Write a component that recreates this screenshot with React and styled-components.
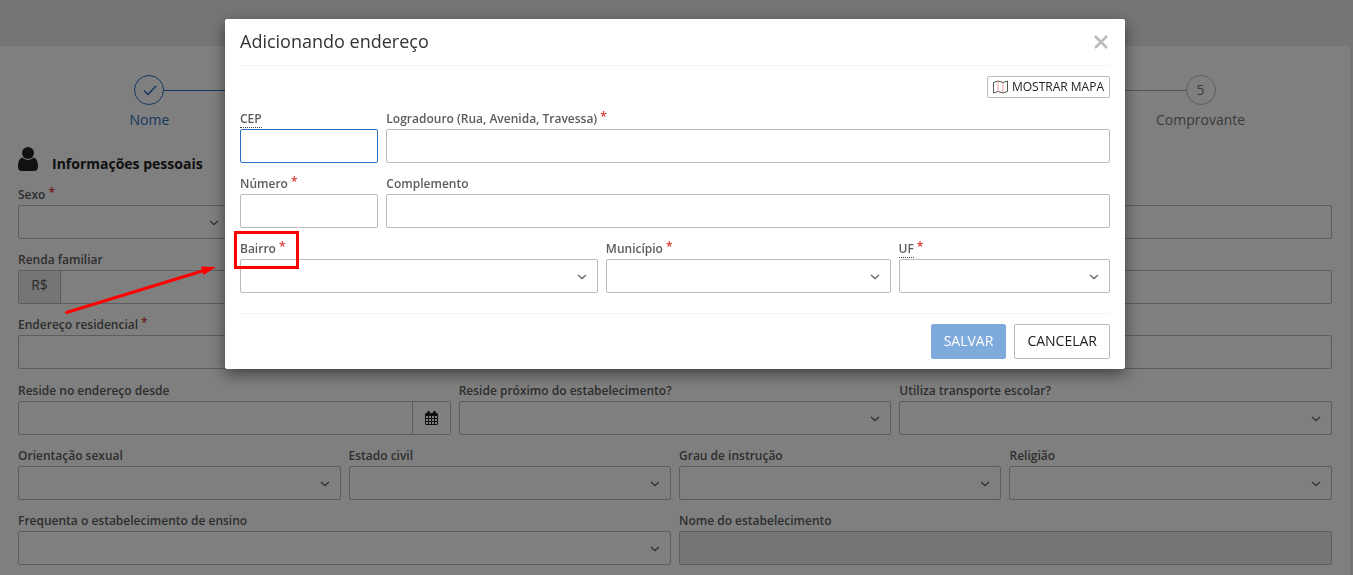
import React, { useId } from "react";
import styled, { createGlobalStyle } from "styled-components";

const GlobalStyle = createGlobalStyle`
  * { box-sizing: border-box; }
  body {
    margin: 0;
    background: #e9ebee;
    color: #222;
    font: 14px/20px "Open Sans", "Noto Sans", sans-serif;
  }
  input, select, button { font: inherit; color: inherit; }
`;

const Page = styled.div`
  padding: 46px 3px 0 0;
  height: 100vh;
  overflow: hidden;
`;

const Card = styled.main`
  min-height: 100%;
  padding: 29px 18px 28px;
  background: #fff;
  border-radius: 2px;
`;

const Steps = styled.ol`
  display: grid;
  grid-template-columns: repeat(5, 1fr);
  margin: 0;
  padding: 0;
  list-style: none;
`;

const Step = styled.li`
  display: grid;
  grid-template-columns: 1fr 30px 1fr;
  align-items: center;
  row-gap: 5px;
  min-height: 55px;
  color: ${(p) => (p.$done ? "#2a6fc3" : "#777")};
`;

const StepLine = styled.span`
  height: 1px;
  background: ${(p) => (p.$hidden ? "transparent" : p.$done ? "#2a6fc3" : "#aaa")};
`;

const StepMark = styled.span`
  display: flex;
  align-items: center;
  justify-content: center;
  height: 30px;
  border: 1px solid ${(p) => (p.$done ? "#2a6fc3" : "#bbb")};
  border-radius: 50%;
`;

const StepName = styled.span`
  grid-column: 1 / -1;
  text-align: center;
`;

const SectionTitle = styled.h2`
  display: flex;
  align-items: flex-end;
  gap: 14px;
  height: 31px;
  margin: 13px 0 12px;
  font-size: 14px;
  line-height: 20px;
  font-weight: 700;
  svg { align-self: center; }
`;

const FieldGrid = styled.div`
  display: grid;
  grid-template-columns: repeat(12, minmax(0, 1fr));
  gap: 12px 8px;
  & + & { margin-top: 13px; }
`;

const FieldBox = styled.div`
  grid-column: span ${(p) => p.$span};
  display: flex;
  flex-direction: column;
  justify-content: flex-end;
  gap: 1px;
`;

const Label = styled.label`
  height: 18px;
  font-size: 12px;
  line-height: 18px;
  font-weight: 600;
  color: #5c5c5c;
  white-space: nowrap;
`;

const Abbr = styled.abbr`
  display: inline-block;
  line-height: 16px;
  border-bottom: 1px dotted #444;
  text-decoration: none;
`;

const Required = styled.sup`
  margin-left: 3px;
  color: #d9302c;
  font-size: 12px;
  line-height: 0;
  vertical-align: 2px;
`;

const TextInput = styled.input`
  width: 100%;
  min-width: 0;
  height: 34px;
  padding: 6px 12px;
  border: 1px solid ${(p) => (p.$active ? "#2a6fc3" : "#bbb")};
  border-radius: 2px;
  background: #fff;
  outline: none;
  &:disabled { background: #e9ebee; }
`;

const SelectWrap = styled.div`
  position: relative;
  color: #666;
  svg {
    position: absolute;
    top: 15px;
    right: 11px;
    pointer-events: none;
  }
`;

const SelectInput = styled.select`
  display: block;
  width: 100%;
  height: 34px;
  padding: 6px 12px;
  border: 1px solid #bbb;
  border-radius: 2px;
  background: #fff;
  appearance: none;
`;

const Group = styled.div`
  display: flex;
  height: 34px;
  border: 1px solid #bbb;
  border-radius: 2px;
  ${TextInput} { height: 32px; border: 0; }
`;

const Prefix = styled.span`
  flex: 0 0 42px;
  padding-top: 4px;
  border-right: 1px solid #bbb;
  background: #e9ebee;
  color: #555;
  text-align: center;
`;

const IconButton = styled.button`
  display: flex;
  align-items: center;
  justify-content: center;
  flex: 0 0 38px;
  padding: 0;
  border: 0;
  border-left: 1px solid #bbb;
  background: #fff;
`;

const Backdrop = styled.div`
  position: fixed;
  inset: 0;
  padding: 19px 3px 0 0;
  background: rgba(0, 0, 0, 0.5);
`;

const Dialog = styled.section`
  max-width: 900px;
  margin: 0 auto;
  padding: 0 15px 10px;
  border-radius: 2px;
  background: #fff;
  box-shadow: 0 5px 15px rgba(0, 0, 0, 0.5);
`;

const DialogHeader = styled.header`
  display: flex;
  align-items: center;
  justify-content: space-between;
  height: 47px;
  border-bottom: 1px solid #f4f4f4;
`;

const DialogTitle = styled.h1`
  margin: 0;
  padding-bottom: 2px;
  font-size: 18px;
  line-height: 24px;
  font-weight: 400;
  color: #333;
`;

const CloseButton = styled.button`
  display: flex;
  padding: 0;
  border: 0;
  background: none;
  color: #bbb;
`;

const MapBar = styled.div`
  display: flex;
  justify-content: flex-end;
  padding: 10px 0 12px;
`;

const MapButton = styled.button`
  display: flex;
  align-items: center;
  gap: 4px;
  height: 22px;
  padding: 0 5px;
  border: 1px solid #bbb;
  border-radius: 2px;
  background: #fff;
  font-size: 12px;
`;

const DialogFooter = styled.footer`
  display: flex;
  justify-content: flex-end;
  gap: 8px;
  margin-top: 20px;
  padding-top: 10px;
  border-top: 1px solid #f4f4f4;
`;

const Button = styled.button`
  height: 35px;
  padding: 0 12px 2px;
  border: 1px solid ${(p) => (p.$primary ? "#7faadc" : "#bbb")};
  border-radius: 2px;
  background: ${(p) => (p.$primary ? "#7faadc" : "#fff")};
  color: ${(p) => (p.$primary ? "#fff" : "#222")};
`;

const Annotation = styled.svg`
  position: absolute;
  top: 0;
  left: 50%;
  margin-left: -677px;
  pointer-events: none;
`;

function Chevron() {
  return (
    <svg width="10" height="7" viewBox="0 0 10 7" fill="none" stroke="currentColor" strokeWidth="1.3" aria-hidden="true">
      <path d="M1 1 5 4.600 9 1" />
    </svg>
  );
}

function Field({ label, hint, abbr, required, span, type = "text", active, disabled }) {
  const id = useId();
  let control;
  if (type === "select") {
    control = (
      <SelectWrap>
        <SelectInput id={id} aria-label={hint}><option value="" /></SelectInput>
        <Chevron />
      </SelectWrap>
    );
  } else if (type === "money") {
    control = <Group><Prefix>R$</Prefix><TextInput id={id} /></Group>;
  } else if (type === "date") {
    control = (
      <Group>
        <TextInput id={id} />
        <IconButton type="button" aria-label="Abrir calendário">
          <svg width="13" height="14" viewBox="0 0 13 14" aria-hidden="true">
            <path fill="currentColor" fillRule="evenodd" d="M1 2h1V1l1-1h1l1 1v1h3V1l1-1h1l1 1v1h1l1 1v10l-1 1H1l-1-1V3zM1 5v2h2V5zm3 0v2h2V5zm3 0v2h2V5zm3 0v2h2V5zM1 8v2h2V8zm3 0v2h2V8zm3 0v2h2V8zm3 0v2h2V8zM1 11v2h2v-2zm3 0v2h2v-2zm3 0v2h2v-2zm3 0v2h2v-2z" />
          </svg>
        </IconButton>
      </Group>
    );
  } else {
    control = <TextInput id={id} $active={active} disabled={disabled} aria-label={hint} />;
  }
  return (
    <FieldBox $span={span}>
      {label && (
        <Label htmlFor={id}>
          {abbr ? <Abbr title={abbr}>{label}</Abbr> : label}
          {required && <Required>*</Required>}
        </Label>
      )}
      {control}
    </FieldBox>
  );
}

const steps = [{ name: "Nome", done: true }, {}, {}, {}, { name: "Comprovante" }];

export default function App() {
  return (
    <>
      <GlobalStyle />
      <Page>
        <Card>
          <Steps>
            {steps.map((s, i) => (
              <Step key={i} $done={s.done}>
                <StepLine $hidden={i === 0} />
                <StepMark $done={s.done}>
                  {s.done ? (
                    <svg width="15" height="13" viewBox="0 0 15 13" fill="none" stroke="currentColor" strokeWidth="1.5" aria-hidden="true">
                      <path d="M2 6.500 6 10.500 14 2" />
                    </svg>
                  ) : i + 1}
                </StepMark>
                <StepLine $hidden={i === 4} $done={s.done} />
                {s.name && <StepName>{s.name}</StepName>}
              </Step>
            ))}
          </Steps>
          <SectionTitle>
            <svg width="20" height="24" viewBox="0 0 20 24" fill="currentColor" aria-hidden="true">
              <circle cx="10" cy="6" r="6" />
              <path d="M4.500 10.500C1.500 11.200 0 14.500 0 19.500 0 22.500 1.500 24 4 24h12c2.500 0 4-1.500 4-4.500 0-5-1.500-8.300-4.500-9C14 12 12 13 10 13s-4-1-5.500-2.500z" />
            </svg>
            Informações pessoais
          </SectionTitle>
          <FieldGrid>
            <Field label="Sexo" required span={2} type="select" />
            <Field hint="Nome social" span={5} />
            <Field hint="Nome da mãe" span={5} />
            <Field label="Renda familiar" span={4} type="money" />
            <Field hint="Telefone" span={4} />
            <Field hint="E-mail" span={4} />
            <Field label="Endereço residencial" required span={12} />
          </FieldGrid>
          <FieldGrid>
            <Field label="Reside no endereço desde" span={4} type="date" />
            <Field label="Reside próximo do estabelecimento?" span={4} type="select" />
            <Field label="Utiliza transporte escolar?" span={4} type="select" />
            <Field label="Orientação sexual" span={3} type="select" />
            <Field label="Estado civil" span={3} type="select" />
            <Field label="Grau de instrução" span={3} type="select" />
            <Field label="Religião" span={3} type="select" />
            <Field label="Frequenta o estabelecimento de ensino" span={6} type="select" />
            <Field label="Nome do estabelecimento" span={6} disabled />
          </FieldGrid>
        </Card>
      </Page>
      <Backdrop>
        <Dialog role="dialog" aria-modal="true" aria-labelledby="dialog-title">
          <DialogHeader>
            <DialogTitle id="dialog-title">Adicionando endereço</DialogTitle>
            <CloseButton type="button" aria-label="Fechar">
              <svg width="16" height="14" viewBox="0 0 16 14" fill="none" stroke="currentColor" strokeWidth="2.500" aria-hidden="true">
                <path d="M1 1l12 12M13 1 1 13" />
              </svg>
            </CloseButton>
          </DialogHeader>
          <MapBar>
            <MapButton type="button">
              <svg width="15" height="14" viewBox="0 0 15 14" fill="none" stroke="#555" strokeWidth="1" aria-hidden="true">
                <path d="M.500 2.500 5 1l5 1.500L14.500 1v10.500L10 13l-5-1.500L.500 13z" />
                <path d="M5 1.500v10M10 3v9.500" stroke="#e8a090" />
              </svg>
              MOSTRAR MAPA
            </MapButton>
          </MapBar>
          <FieldGrid>
            <Field label="CEP" abbr="Código de Endereçamento Postal" span={2} active />
            <Field label="Logradouro (Rua, Avenida, Travessa)" required span={10} />
            <Field label="Número" required span={2} />
            <Field label="Complemento" span={10} />
            <Field label="Bairro" required span={5} type="select" />
            <Field label="Município" required span={4} type="select" />
            <Field label="UF" abbr="Unidade Federativa" required span={3} type="select" />
          </FieldGrid>
          <DialogFooter>
            <Button type="button" $primary>SALVAR</Button>
            <Button type="button">CANCELAR</Button>
          </DialogFooter>
        </Dialog>
        <Annotation width="310" height="330" viewBox="0 0 310 330" aria-hidden="true">
          <rect x="235.500" y="232.500" width="62" height="35" fill="none" stroke="#f00" strokeWidth="3" />
          <path d="M66.500 312.500 204 270.500" stroke="#f00" strokeWidth="3" strokeLinecap="round" />
          <path d="M201 266.500 216 267 203.500 275z" fill="#f00" />
        </Annotation>
      </Backdrop>
    </>
  );
}
